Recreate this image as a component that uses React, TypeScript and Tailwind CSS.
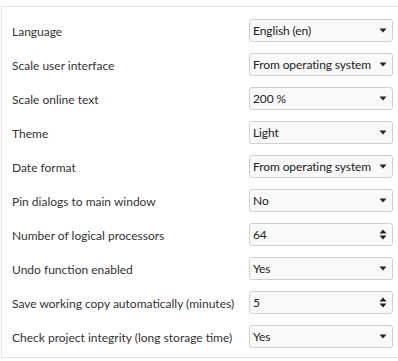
import React from 'react';

type Row = { label: string; value: string; kind: 'select' | 'spin' };

const rows: Row[] = [
  { label: 'Language', value: 'English (en)', kind: 'select' },
  { label: 'Scale user interface', value: 'From operating system', kind: 'select' },
  { label: 'Scale online text', value: '200 %', kind: 'select' },
  { label: 'Theme', value: 'Light', kind: 'select' },
  { label: 'Date format', value: 'From operating system', kind: 'select' },
  { label: 'Pin dialogs to main window', value: 'No', kind: 'select' },
  { label: 'Number of logical processors', value: '64', kind: 'spin' },
  { label: 'Undo function enabled', value: 'Yes', kind: 'select' },
  { label: 'Save working copy automatically (minutes)', value: '5', kind: 'spin' },
  { label: 'Check project integrity (long storage time)', value: 'Yes', kind: 'select' },
];

function Caret() {
  return (
    <svg width="8" height="5" viewBox="0 0 8 5" className="shrink-0">
      <path d="M0.5 0.5h7L4 4.5z" fill="#222" />
    </svg>
  );
}

function Spin() {
  return (
    <svg width="8" height="11" viewBox="0 0 8 11" className="shrink-0">
      <path d="M0.5 4.5h7L4 0.5z" fill="#222" />
      <path d="M0.5 6.5h7L4 10.5z" fill="#222" />
    </svg>
  );
}

export default function App() {
  return (
    <div
      className="w-[398px] h-[361px] overflow-hidden bg-white pt-[6px] pl-[1px]"
      style={{ fontFamily: 'Lato, "Noto Sans", sans-serif' }}
    >
      <div className="w-[420px] border-t border-l border-b border-[#e3e3e3] bg-white pt-[6px] pb-[4px]">
        {rows.map((r) => (
          <div key={r.label} className="h-[34px] flex items-center">
            <span className="flex-1 pl-[10px] pt-[3px] text-[12px] text-[#333] whitespace-nowrap">{r.label}</span>
            <div className="w-[144px] h-[23px] mr-[28px] flex items-center justify-between rounded-[3px] border border-[#cfcfcf] bg-[#f9f9f9] pl-[3px] pr-[5px] text-[12px] text-[#222]">
              <span className="whitespace-nowrap pt-[1px] tracking-[-0.1px]">{r.value}</span>
              {r.kind === 'select' ? <Caret /> : <Spin />}
            </div>
          </div>
        ))}
      </div>
    </div>
  );
}
